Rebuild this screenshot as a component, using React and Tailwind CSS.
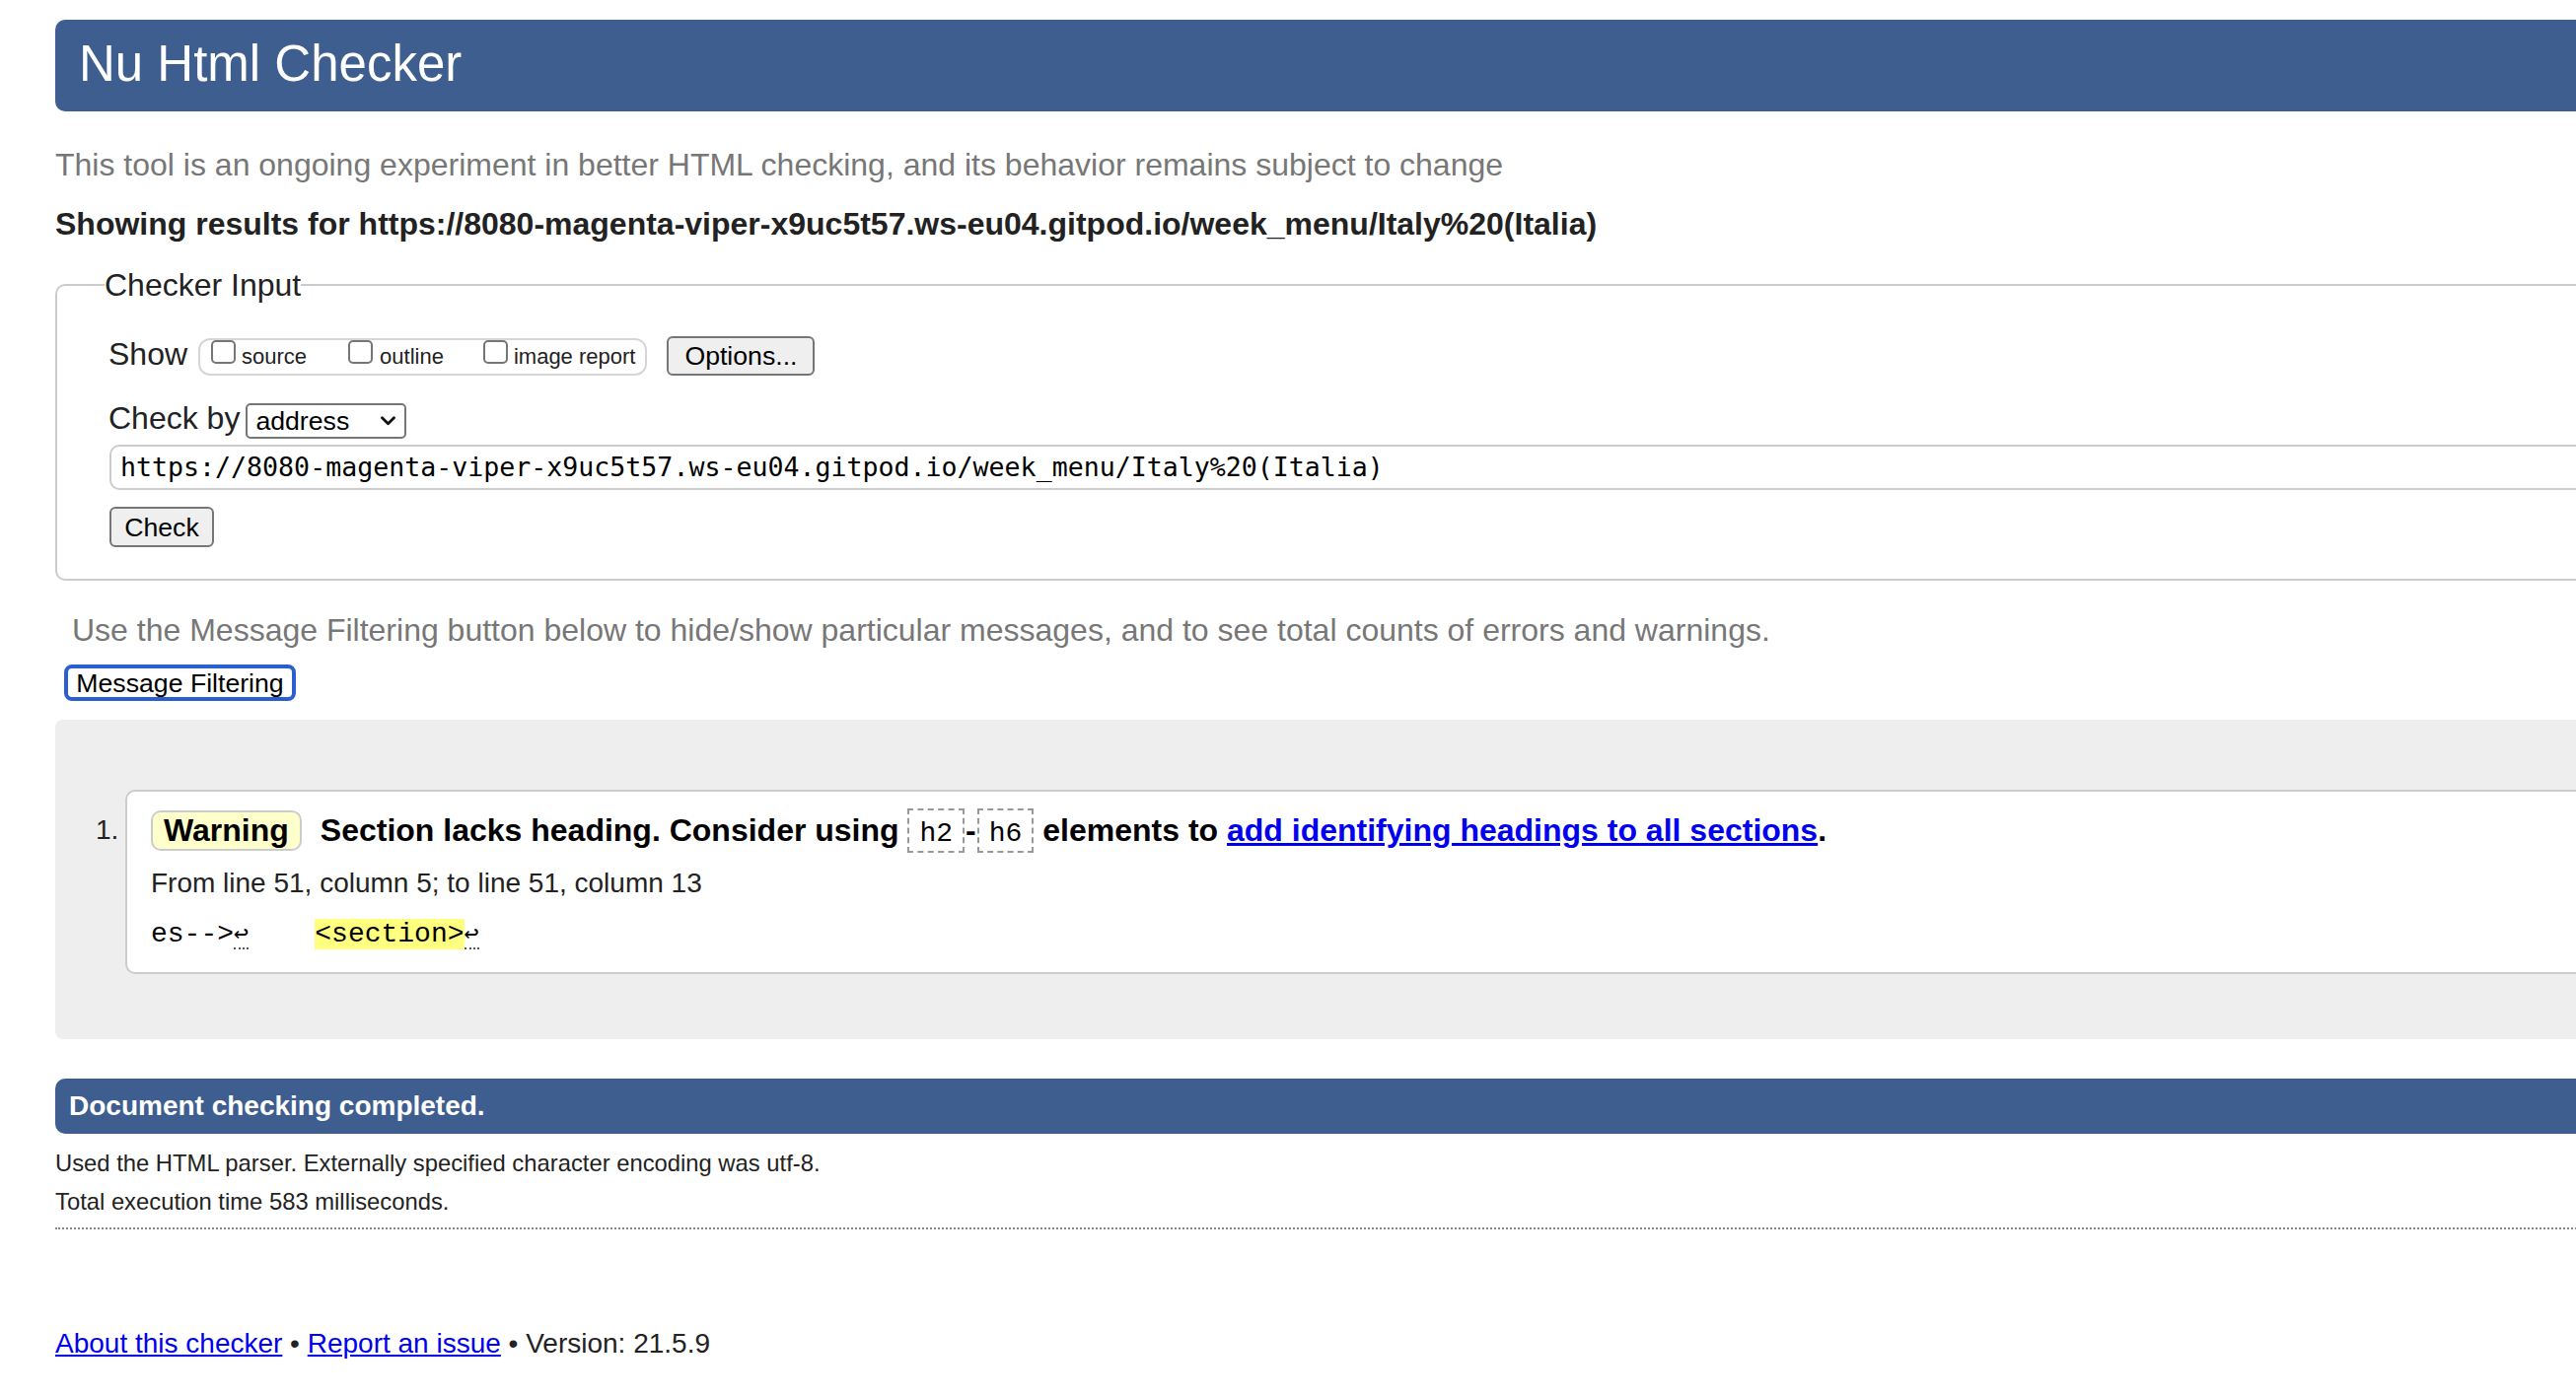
export default function App() {
  return (
    <div className="min-h-screen w-full overflow-x-hidden bg-white text-[#222] font-['Liberation_Sans',Arial,sans-serif]">
      <div className="ml-[56px] -mr-[24px] pt-[20px] pb-[24px]">
        {/* Header */}
        <h1 className="h-[93px] rounded-l-[10px] bg-[#3f5e90] pl-[24px] text-[51px] leading-[90px] font-normal text-white">
          Nu Html Checker
        </h1>

        <p className="mt-[34px] text-[32px] leading-[40px] text-[#777]">
          This tool is an ongoing experiment in better HTML checking, and its behavior remains subject to change
        </p>
        <p className="mt-[20px] text-[32px] leading-[40px] font-bold text-[#222]">
          Showing results for https://8080-magenta-viper-x9uc5t57.ws-eu04.gitpod.io/week_menu/Italy%20(Italia)
        </p>

        {/* Checker input */}
        <fieldset className="mt-[22px] min-w-0 rounded-[10px] border-2 border-[#ccc]">
          <legend className="ml-[48px] text-[32px] leading-[40px]">Checker Input</legend>
          <div className="pl-[52px] pt-[32px] pb-[32px]">
            {/* Show row */}
            <div className="flex items-start">
              <span className="text-[32px] leading-[36px]">Show</span>
              <div className="ml-[11px] mt-[2px] flex h-[38px] items-start rounded-[12px] border-2 border-[#d6d6d6] pl-[11px] pr-[10px]">
                <span className="h-[24px] w-[25px] rounded-[5px] border-2 border-[#767676] bg-white" />
                <span className="ml-[6px] mt-[4px] text-[22px] leading-[26px]">source</span>
                <span className="ml-[42px] h-[24px] w-[25px] rounded-[5px] border-2 border-[#767676] bg-white" />
                <span className="ml-[7px] mt-[4px] text-[22px] leading-[26px]">outline</span>
                <span className="ml-[40px] h-[24px] w-[25px] rounded-[5px] border-2 border-[#767676] bg-white" />
                <span className="ml-[6px] mt-[4px] text-[22px] leading-[26px]">image report</span>
              </div>
              <button className="ml-[20px] h-[40px] w-[150px] rounded-[6px] border-2 border-[#767676] bg-[#efefef] text-[26.67px] leading-[36px] text-black">
                Options...
              </button>
            </div>

            {/* Check by row */}
            <div className="mt-[28px] flex h-[36px] items-center">
              <span className="mb-[6px] text-[32px] leading-[30px]">Check by</span>
              <div className="ml-[6px] flex h-[36px] w-[163px] items-center justify-between rounded-[5px] border-2 border-[#767676] bg-white pl-[8px] pr-[9px]">
                <span className="text-[26.67px] leading-[30px] text-black">address</span>
                <svg width="15" height="10" viewBox="0 0 15 10" fill="none">
                  <path d="M1.5 1.8 L7.5 7.8 L13.5 1.8" stroke="#111" strokeWidth="2.8" strokeLinecap="round" strokeLinejoin="round" />
                </svg>
              </div>
            </div>

            {/* URL field */}
            <div className="mt-[6px] ml-[1px] flex h-[46px] items-center rounded-l-[10px] border-2 border-[#ccc] bg-white pl-[9px] font-['DejaVu_Sans_Mono',monospace] text-[26.6px] text-black">
              https://8080-magenta-viper-x9uc5t57.ws-eu04.gitpod.io/week_menu/Italy%20(Italia)
            </div>

            <button className="mt-[17px] ml-[1px] block h-[41px] w-[106px] rounded-[6px] border-2 border-[#767676] bg-[#efefef] text-[26.67px] leading-[36px] text-black">
              Check
            </button>
          </div>
        </fieldset>

        <p className="mt-[30px] ml-[17px] text-[32px] leading-[40px] text-[#777]">
          Use the Message Filtering button below to hide/show particular messages, and to see total counts of errors and warnings.
        </p>
        <button className="mt-[15px] ml-[9px] block h-[37px] w-[235px] rounded-[8px] border-[4px] border-[#2b5fcf] bg-white text-[26.67px] leading-[28px] text-black">
          Message Filtering
        </button>

        {/* Results */}
        <div className="mt-[19px] flex rounded-l-[8px] bg-[#eee] pl-[41px] pt-[71px] pb-[66px]">
          <span className="mt-[25px] w-[30px] text-[28px] leading-[32px]">1.</span>
          <div className="flex-1 rounded-l-[10px] border-2 border-[#ccc] bg-white pl-[24px] pt-[17px] pb-[20px]">
            <p className="text-[32px] leading-[42px] font-bold text-black">
              <span className="inline-block rounded-[10px] border-2 border-[#ccc] bg-[#ffffcc] px-[11px] leading-[37px]">Warning</span>
              <span className="ml-[19px]">Section lacks heading. Consider using </span>
              <code className="inline-block border-2 border-dashed border-[#999] px-[10px] pt-[8px] pb-[1px] font-['Liberation_Mono',monospace] text-[28px] leading-[32px] font-normal">h2</code>
              <span className="mx-[1px]">-</span>
              <code className="inline-block border-2 border-dashed border-[#999] px-[10px] pt-[8px] pb-[1px] font-['Liberation_Mono',monospace] text-[28px] leading-[32px] font-normal">h6</code>
              <span> elements to </span>
              <a href="#" className="text-[#0000ee] underline">add identifying headings to all sections</a>
              <span>.</span>
            </p>
            <p className="mt-[13px] text-[28px] leading-[36px] text-[#222]">
              From line 51, column 5; to line 51, column 13
            </p>
            <p className="mt-[15px] whitespace-pre font-['Liberation_Mono',monospace] text-[28px] leading-[36px] text-black">
              <span>es--&gt;</span>
              <span className="border-b-2 border-dotted border-[#555] font-['DejaVu_Sans_Mono',monospace] text-[25px]">↩</span>
              <span>    </span>
              <span className="bg-[#ffff80]">&lt;section&gt;</span>
              <span className="border-b-2 border-dotted border-[#555] font-['DejaVu_Sans_Mono',monospace] text-[25px]">↩</span>
            </p>
          </div>
        </div>

        {/* Summary */}
        <div className="mt-[40px] h-[56px] rounded-l-[10px] bg-[#3f5e90] pl-[14px] text-[28px] leading-[56px] font-bold text-white">
          Document checking completed.
        </div>
        <p className="mt-[14px] text-[23.8px] leading-[32px]">
          Used the HTML parser. Externally specified character encoding was utf-8.
        </p>
        <p className="mt-[7px] text-[23.8px] leading-[32px]">Total execution time 583 milliseconds.</p>
        <div className="mt-[10px] border-t-2 border-dotted border-[#888]" />

        <p className="mt-[98px] text-[28px] leading-[36px]">
          <a href="#" className="text-[#0000ee] underline">About this checker</a>
          <span> • </span>
          <a href="#" className="text-[#0000ee] underline">Report an issue</a>
          <span> • Version: 21.5.9</span>
        </p>
      </div>
    </div>
  )
}
